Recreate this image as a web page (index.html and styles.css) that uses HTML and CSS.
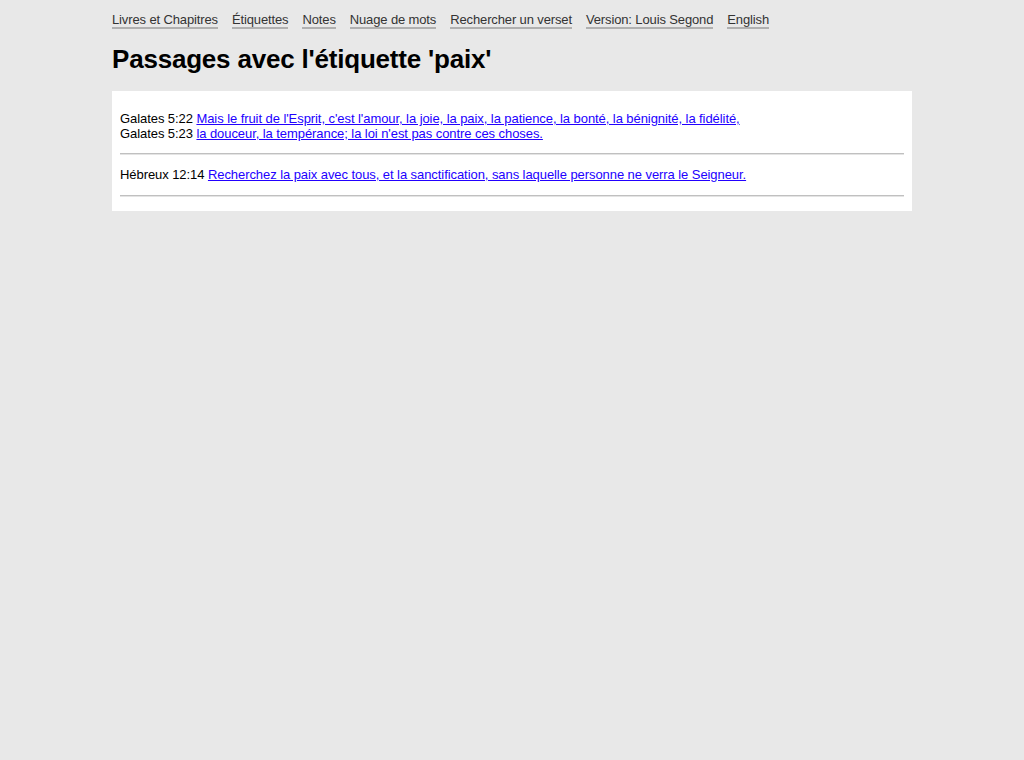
FILE: index.html
```html
<!DOCTYPE html>
<html lang="fr">
<head>
<meta charset="utf-8">
<title>Passages avec l'étiquette 'paix'</title>
<link rel="stylesheet" href="styles.css">
</head>
<body>
<div class="page">
  <nav class="nav">
    <a href="#">Livres et Chapitres</a>
    <a href="#">Étiquettes</a>
    <a href="#">Notes</a>
    <a href="#">Nuage de mots</a>
    <a href="#">Rechercher un verset</a>
    <a href="#">Version: Louis Segond</a>
    <a href="#">English</a>
  </nav>
  <h1 class="title">Passages avec l'étiquette 'paix'</h1>
  <div class="box">
    <p class="passage">
      Galates 5:22 <a href="#">Mais le fruit de l'Esprit, c'est l'amour, la joie, la paix, la patience, la bonté, la bénignité, la fidélité,</a><br>
      Galates 5:23 <a href="#">la douceur, la tempérance; la loi n'est pas contre ces choses.</a>
    </p>
    <hr class="sep">
    <p class="passage">
      Hébreux 12:14 <a href="#">Recherchez la paix avec tous, et la sanctification, sans laquelle personne ne verra le Seigneur.</a>
    </p>
    <hr class="sep">
  </div>
</div>
</body>
</html>
```
FILE: styles.css
```css
html, body {
  margin: 0;
  padding: 0;
  background: #e8e8e8;
  font-family: "Liberation Sans", Arial, sans-serif;
  font-size: 13px;
  letter-spacing: -0.07px;
  color: #000;
}
.page {
  width: 800px;
  margin: 0 auto;
}
.nav {
  display: flex;
  gap: 14px;
  padding-top: 12px;
  line-height: 15px;
  letter-spacing: -0.13px;
}
.nav a {
  color: #333;
  text-decoration: none;
  border-bottom: 2px solid #b0b0b0;
}
.title {
  font-size: 26px;
  font-weight: bold;
  letter-spacing: -0.2px;
  margin: 15px 0 17px;
  line-height: 30px;
}
.box {
  background: #fff;
  padding: 8px 8px 14px;
}
.passage {
  margin: 12px 0;
  line-height: 15px;
}
.passage:last-of-type {
  margin-bottom: 13px;
}
.passage a {
  color: #2200ff;
}
.sep {
  margin: 0;
  border: 0;
  border-top: 1px solid #c0c0c0;
  border-bottom: 1px solid #e4e4e4;
  height: 0;
}
```
